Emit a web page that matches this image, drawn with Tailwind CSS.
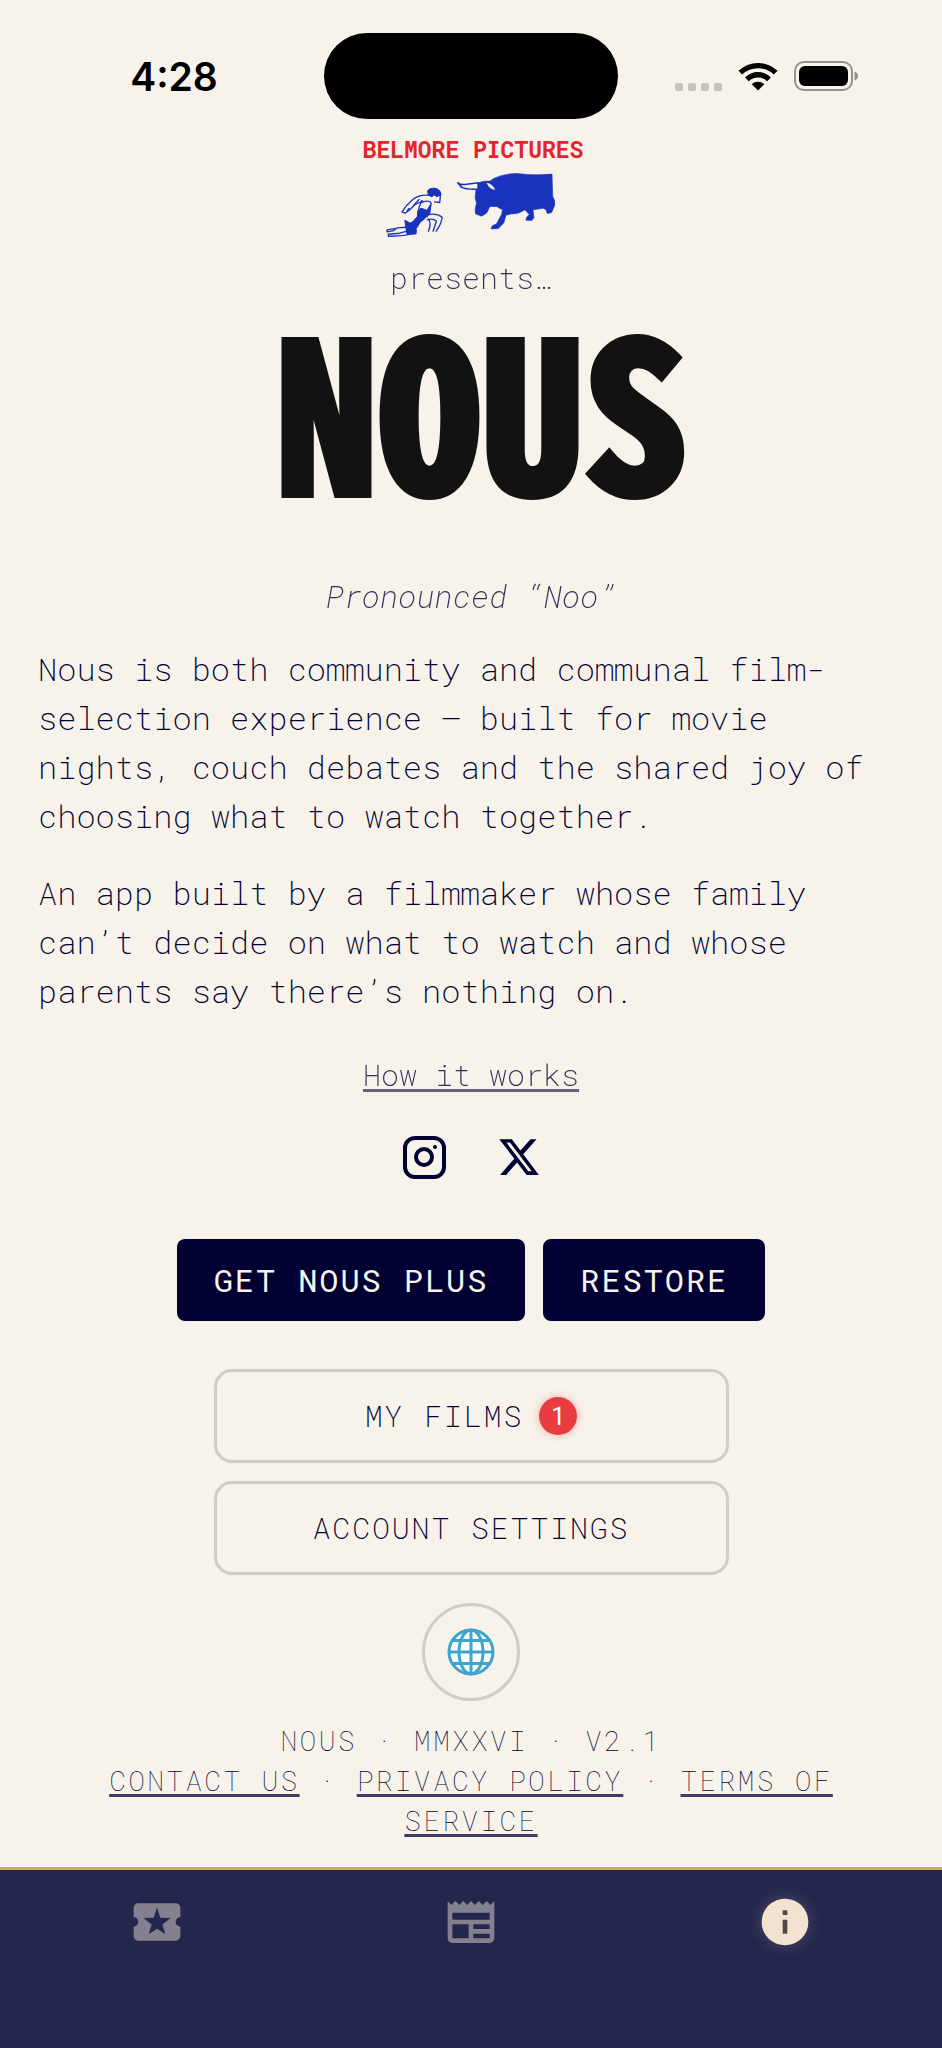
<!DOCTYPE html>
<html lang="en">
<head>
    <meta charset="UTF-8">
    <meta name="viewport" content="width=device-width, initial-scale=1.0">
    <title>Nous - About</title>
    <script src="https://cdn.jsdelivr.net/npm/@tailwindcss/browser@4"></script>
    <style>
        body {
            font-family: 'Roboto Mono', 'Liberation Mono', monospace;
        }
        .status-time {
            font-family: Inter, 'Liberation Sans', sans-serif;
        }
        .wordmark {
            font-family: 'Noto Sans Mono CJK SC', 'Roboto Condensed', sans-serif;
            -webkit-text-stroke: 8px #121212;
            stroke-linejoin: round;
        }
    </style>
</head>
<body class="bg-[#f7f3eb] text-[#000033] flex flex-col min-h-screen">

    <!-- Status bar -->
    <header class="grid grid-cols-[1fr_294px_1fr] items-center pt-[33px] text-black">
        <span class="status-time pl-6 text-center text-[39px] font-semibold leading-none">4:28</span>
        <div class="h-[86px] rounded-full bg-black"></div>
        <div class="flex justify-center items-end pr-7">
            <div class="flex gap-[5px] mr-4">
                <span class="size-2 rounded-xs bg-[#c6c3bd]"></span>
                <span class="size-2 rounded-xs bg-[#c6c3bd]"></span>
                <span class="size-2 rounded-xs bg-[#c6c3bd]"></span>
                <span class="size-2 rounded-xs bg-[#c6c3bd]"></span>
            </div>
            <svg class="w-10 h-[30px] mr-4" viewBox="0 0 40 30">
                <path d="M0.5 9.8A28 28 0 0 1 39.5 9.8L35.8 13.6A22.7 22.7 0 0 0 4.2 13.6Z"/>
                <path d="M7 16.4A18.6 18.6 0 0 1 33 16.4L29.2 20.2A13.3 13.3 0 0 0 10.8 20.2Z"/>
                <path d="M13.7 23.2A9.2 9.2 0 0 1 26.3 23.2L20 29.6Z"/>
            </svg>
            <svg class="w-16 h-[30px]" viewBox="0 0 64 30">
                <rect x="1" y="1" width="57" height="28" rx="9" fill="none" stroke="#96938e" stroke-width="2"/>
                <rect x="5" y="5" width="49" height="20" rx="6"/>
                <path d="M60.5 10.5Q64 12 64 15T60.5 19.5Z" fill="#96938e"/>
            </svg>
        </div>
    </header>

    <main class="flex flex-col items-center px-[38px] pb-6">

        <!-- Production company -->
        <p class="mt-4 pl-1 text-[23px] leading-7 font-bold text-[#e5242a]">BELMORE PICTURES</p>
        <svg class="mt-2 w-[177px] h-[67px]" viewBox="100 120 530 200" role="img" aria-label="Runner chased by a bull">
            <g fill="#1a33bd" stroke="#1a33bd" stroke-width="2" stroke-linejoin="round">
                <path d="M385 155Q400 149 420 150L432 142Q460 128 500 127L530 130Q565 133 606 129L608 195Q616 208 614 222L605 244L592 247L588 236L580 231L549 236L552 260L545 268L528 267L530 258L538 250L525 236Q505 250 485 248L468 252L462 275L445 292L424 293L427 284L440 278L455 250L458 236L440 226L420 226L410 246L395 255L377 248L376 235L380 215L376 200L378 180Z"/>
                <path d="M324 155Q331 161 345 160L385 155V174Q350 176 335 168Z" fill="#f7f3eb" stroke-width="5"/>
                <path d="M410 155Q428 158 436 176Q420 177 410 155Z" fill="#f7f3eb" stroke="none"/>
            </g>
            <g fill="none" stroke="#1a33bd" stroke-width="4" stroke-linejoin="round" stroke-linecap="round">
                <!-- head -->
                <path d="M234 180Q240 170 256 172Q272 176 273 190L262 196L252 190L246 196L236 190Z" fill="#1a33bd"/>
                <path d="M272 190L270 214L254 212"/>
                <!-- back arm -->
                <path d="M246 194Q215 187 190 204Q170 220 157 242L166 246L178 238L196 220L220 210"/>
                <path d="M178 232L172 240M208 205L192 222"/>
                <!-- torso -->
                <path d="M216 208Q206 230 204 248L212 262M216 214Q238 205 244 215Q242 240 232 256"/>
                <path d="M204 242L214 232L232 238L242 222L240 244L228 258L210 274L196 296L176 280L190 272L204 256Z" fill="#1a33bd"/>
                <!-- front leg -->
                <path d="M238 250Q262 246 277 258Q276 276 259 300M232 266Q250 260 260 270Q256 280 250 300M236 264Q246 276 236 300"/>
                <!-- trailing leg -->
                <path d="M166 268L180 276L200 298L196 308H172Z" fill="#1a33bd"/>
                <path d="M200 306Q160 316 116 315V309L150 306L172 300M170 288L142 290L132 298L112 302V296L134 292"/>
            </g>
        </svg>
        <p class="mt-5 text-[30px] leading-10 font-extralight opacity-80">presents…</p>

        <!-- Wordmark -->
        <h1 class="wordmark mt-5 pl-5 text-[206px] leading-[172px] font-black text-[#121212]">NOUS</h1>
        <p class="mt-[86px] text-[31px] leading-10 font-extralight italic opacity-80">Pronounced “Noo”</p>

        <!-- About -->
        <section class="mt-7 w-full space-y-7 text-[32px] leading-[49px] font-extralight">
            <p>Nous is both community and communal film-selection experience — built for movie nights, couch debates and the shared joy of choosing what to watch together.</p>
            <p>An app built by a filmmaker whose family can’t decide on what to watch and whose parents say there’s nothing on.</p>
        </section>

        <a href="#" class="mt-10 text-[30px] leading-10 font-extralight underline decoration-[#3f3d66] decoration-3 underline-offset-3 opacity-80">How it works</a>

        <!-- Social links -->
        <div class="mt-10 flex gap-[51px]">
            <a href="#" aria-label="Instagram">
                <svg class="size-11" viewBox="0 0 44 44" fill="none" stroke="currentColor" stroke-width="4">
                    <rect x="3" y="3" width="39" height="39" rx="10"/>
                    <circle cx="22" cy="22" r="8"/>
                    <circle cx="33" cy="12" r="2" fill="currentColor" stroke="none"/>
                </svg>
            </a>
            <a href="#" aria-label="X">
                <svg class="size-11" viewBox="0.5 0 23 24" fill="currentColor">
                    <path d="M18.244 2.25h3.308l-7.227 8.26 8.502 11.24H16.17l-5.214-6.817L4.99 21.75H1.68l7.73-8.835L1.254 2.25H8.08l4.713 6.231zm-1.161 17.52h1.833L7.084 4.126H5.117z"/>
                </svg>
            </a>
        </div>

        <!-- Purchases -->
        <div class="mt-15 flex gap-[18px] text-[32px] leading-[42px] tracking-[0.06em] text-[#f7f3eb]">
            <button type="button" class="rounded-lg bg-[#000033] px-[37px] py-5">GET NOUS PLUS</button>
            <button type="button" class="rounded-lg bg-[#000033] px-[37px] py-5">RESTORE</button>
        </div>

        <!-- Account -->
        <div class="mt-12 w-full max-w-[515px] flex flex-col gap-[18px] text-[30px] leading-10 font-extralight tracking-[0.06em]">
            <button type="button" class="flex items-center justify-center gap-4 rounded-[18px] border-3 border-[#d0cdc5] py-6">
                MY FILMS
                <span class="flex size-[38px] items-center justify-center rounded-full bg-[#e93c41] text-[25px] font-normal tracking-normal text-white shadow-[0_0_8px_#e93c4166]">1</span>
            </button>
            <button type="button" class="rounded-[18px] border-3 border-[#d0cdc5] py-6">ACCOUNT SETTINGS</button>
        </div>

        <button type="button" aria-label="Language" class="mt-7 flex size-[98px] items-center justify-center rounded-full border-3 border-[#d0cdc5]">
            <svg class="size-12" viewBox="0 0 48 48" fill="none" stroke="#3da3cf" stroke-width="3">
                <circle cx="24" cy="24" r="22" fill="#fdfdfb"/>
                <ellipse cx="24" cy="24" rx="12" ry="22"/>
                <path d="M24 2V46M2 24H46M6 12.5H42M6 35.5H42"/>
            </svg>
        </button>

        <!-- Legal -->
        <footer class="mt-5 text-center text-[28px] leading-10 font-thin tracking-[0.08em]">
            <p>NOUS · MMXXVI · V2.1</p>
            <p>
                <a href="#" class="underline decoration-[#3f3d66] decoration-3 underline-offset-3">CONTACT US</a> ·
                <a href="#" class="underline decoration-[#3f3d66] decoration-3 underline-offset-3">PRIVACY POLICY</a> ·
                <a href="#" class="underline decoration-[#3f3d66] decoration-3 underline-offset-3">TERMS OF SERVICE</a>
            </p>
        </footer>
    </main>

    <!-- Tab bar -->
    <nav class="mt-auto grid grid-cols-3 justify-items-center border-t-3 border-[#c5b04c] bg-[#25264d] pt-6 pb-[98px]">
        <a href="#" aria-label="Tickets" class="text-[#85808f]">
            <svg class="size-14" viewBox="0 0 24 24" fill="currentColor">
                <path d="M20 12c0-1.1.9-2 2-2V6c0-1.1-.9-2-2-2H4c-1.1 0-1.99.9-1.99 2v4c1.1 0 1.99.9 1.99 2s-.89 2-2 2v4c0 1.1.9 2 2 2h16c1.1 0 2-.9 2-2v-4c-1.1 0-2-.9-2-2zM15.6 17.3L12 14.9l-3.6 2.4 1.3-4.2L6.2 10.3l4.4-.1L12 5.8l1.4 4.4 4.4.1-3.5 2.8z"/>
            </svg>
        </a>
        <a href="#" aria-label="News" class="text-[#85808f]">
            <svg class="size-14" viewBox="0 0 24 24" fill="currentColor">
                <path d="M22 3l-1.67 1.67L18.67 3L17 4.67L15.33 3l-1.66 1.67L12 3l-1.67 1.67L8.67 3L7 4.67L5.33 3L3.67 4.67L2 3v16c0 1.1.9 2 2 2h16c1.1 0 2-.9 2-2V3zM11 19H4v-6h7v6zM20 19h-7v-2h7v2zM20 15h-7v-2h7v2zM20 11H4V8h16v3z"/>
            </svg>
        </a>
        <a href="#" aria-label="About" class="text-[#f3e2d0]">
            <svg class="size-14 drop-shadow-[0_0_8px_#f3e2d033]" viewBox="0 0 24 24">
                <circle cx="12" cy="12" r="10" fill="currentColor"/>
                <path d="M11 7h2v2h-2zM11 11h2v6h-2z" fill="#504a48"/>
            </svg>
        </a>
    </nav>

</body>
</html>
